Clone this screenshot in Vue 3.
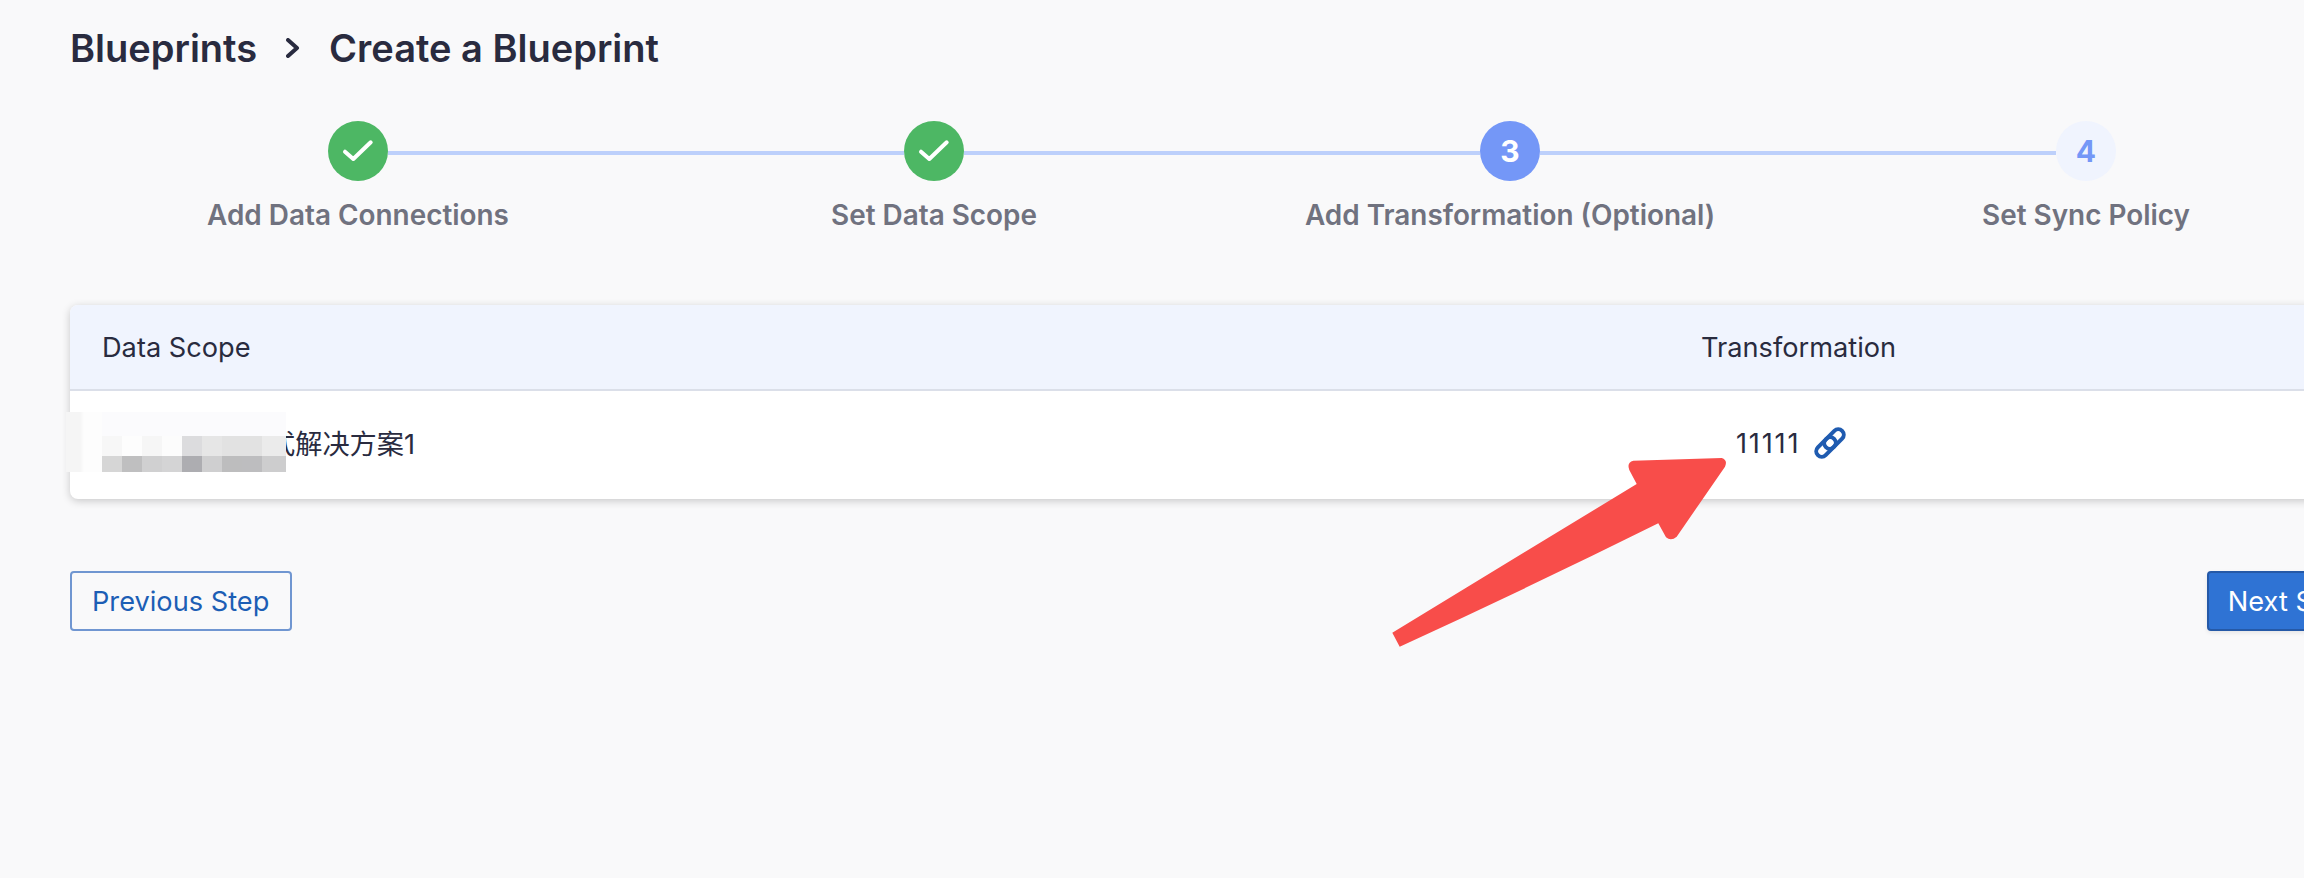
<script setup>
const steps = [
  { label: 'Add Data Connections', state: 'done' },
  { label: 'Set Data Scope', state: 'done' },
  { label: 'Add Transformation (Optional)', state: 'active', n: 3 },
  { label: 'Set Sync Policy', state: 'todo', n: 4 },
]
const row1 = ['#f7f7f7', '#fdfdfd', '#f6f6f6', '#fcfcfc', '#dcdcde', '#e6e6e6', '#e2e2e2', '#e2e2e2', '#ebebeb']
const row2 = ['#d6d6d6', '#bfbfc0', '#d0d0d1', '#d4d4d5', '#adadb1', '#cfcfd0', '#bdbdbe', '#bdbdbf', '#cdcdce']
</script>

<template>
  <div class="page">
    <div class="content">
      <div class="crumbs">
        <span>Blueprints</span>
        <svg class="chev" width="14" height="20" viewBox="0 0 14 20">
          <path d="M2 2 L11 10 L2 18" fill="none" stroke="#292b3f" stroke-width="4" stroke-linecap="round" stroke-linejoin="round" />
        </svg>
        <span>Create a Blueprint</span>
      </div>

      <div class="steps">
        <div v-for="(s, i) in steps" :key="s.label" class="step" :class="[s.state, { last: i === 3 }]">
          <div class="circle">
            <svg v-if="s.state === 'done'" width="60" height="60" viewBox="0 0 60 60">
              <path d="M17 30.7 L25.3 38 L42.7 21.3" fill="none" stroke="#fff" stroke-width="4" stroke-linecap="round" stroke-linejoin="round" />
            </svg>
            <template v-else>{{ s.n }}</template>
          </div>
          <div class="label">{{ s.label }}</div>
        </div>
      </div>

      <div class="table">
        <div class="thead">
          <div>Data Scope</div>
          <div>Transformation</div>
        </div>
        <div class="tbody">
          <div class="scope">式解决方案1</div>
          <div class="trans">
            <span class="num">11111</span>
            <svg width="32" height="32" viewBox="0 0 32 32" fill="none" stroke="#1f5bb0" stroke-width="4">
              <rect x="-11.5" y="-5.5" width="23" height="11" rx="5.5" transform="translate(20 12) rotate(-45)" />
              <rect x="-11.5" y="-5.5" width="23" height="11" rx="5.5" transform="translate(12 20) rotate(-45)" />
            </svg>
          </div>
        </div>
      </div>

      <div class="actions">
        <button class="btn prev">Previous Step</button>
        <button class="btn next">Next Step</button>
      </div>
    </div>

    <div class="mosaic">
      <div class="m-left"></div>
      <div class="m-main">
        <div class="m-top"></div>
        <div class="m-row r1">
          <i v-for="(c, i) in row1" :key="i" :style="{ background: c }"></i>
        </div>
        <div class="m-row r2">
          <i v-for="(c, i) in row2" :key="i" :style="{ background: c }"></i>
        </div>
      </div>
    </div>

    <svg class="arrow" width="2304" height="878" viewBox="0 0 2304 878">
      <path fill="#f84d4a" d="M1392.3 632.7 L1399.7 646.7 Q1530 587 1658.3 523.3 L1666 537.3 Q1671 541.5 1676.7 536.7 L1725 466.7 Q1728 460 1721.7 458 L1633.3 460.7 Q1626.5 462.5 1629.3 470 L1636.7 484 Z" />
    </svg>
  </div>
</template>

<style>
html, body { margin: 0; background: #f9f9fa; overflow: hidden; }
</style>

<style scoped>
.page {
  position: relative;
  width: 2304px;
  height: 878px;
  overflow: hidden;
  background: #f9f9fa;
  font-family: Inter, "Noto Sans CJK SC", sans-serif;
  color: #292b3f;
}
.content {
  width: 2304px;
  margin-left: 70px;
  padding-top: 24px;
}
.crumbs {
  display: flex;
  align-items: center;
  gap: 29px;
  height: 48px;
  font-size: 38px;
  font-weight: 600;
  line-height: 48px;
}
.steps {
  display: grid;
  grid-template-columns: repeat(4, 576px);
  margin-top: 49px;
}
.step {
  position: relative;
  display: flex;
  flex-direction: column;
  align-items: center;
}
.step::after {
  content: "";
  position: absolute;
  left: calc(50% + 30px);
  width: 516px;
  top: 30px;
  height: 4px;
  background: #bdd0fb;
}
.step.last::after { display: none; }
.circle {
  width: 60px;
  height: 60px;
  border-radius: 50%;
  display: flex;
  align-items: center;
  justify-content: center;
  font-size: 30px;
  font-weight: 700;
}
.done .circle { background: #4db764; }
.active .circle { background: #7497f7; color: #fff; }
.todo .circle { background: #f0f4fe; color: #7497f7; }
.label {
  margin-top: 17px;
  font-size: 27.9px;
  line-height: 34px;
  font-weight: 600;
  color: #70727f;
  white-space: nowrap;
}
.table {
  margin-top: 73px;
  border-radius: 8px;
  background: #fff;
  box-shadow: 0 2px 8px rgba(0, 0, 0, 0.2);
}
.thead, .tbody {
  display: grid;
  font-size: 27.2px;
}
.thead {
  height: 84px;
  align-items: center;
  background: #f0f4fe;
  border-bottom: 2px solid #dbdfe9;
  border-radius: 8px 8px 0 0;
  padding-left: 32px;
  grid-template-columns: 1599px 1fr;
}
.tbody {
  grid-template-columns: 1631px 1fr;
  height: 108px;
  align-items: center;
}
.scope {
  padding-left: 198px;
  line-height: 34px;
}
.trans {
  display: flex;
  align-items: center;
  gap: 14px;
  padding-left: 35px;
  margin-top: -4px;
}
.num { letter-spacing: 1.8px; }
.actions {
  display: flex;
  justify-content: space-between;
  margin-top: 72px;
}
.btn {
  height: 60px;
  box-sizing: border-box;
  border-radius: 4px;
  font-family: inherit;
  font-size: 27.2px;
  cursor: pointer;
}
.prev {
  padding: 0 21px 0 20px;
  background: transparent;
  border: 2px solid #7096d1;
  color: #1c5eb5;
}
.next {
  padding: 0 20px 0 19px;
  background: #2f73d4;
  border: 2px solid #2559a7;
  color: #fff;
  box-shadow: 0 2px 4px rgba(0, 0, 0, 0.08);
  margin-right: -2px;
}
.mosaic {
  position: absolute;
  left: 66px;
  top: 412px;
  width: 220px;
  height: 60px;
  display: flex;
}
.m-left {
  width: 36px;
  height: 60px;
  background: linear-gradient(90deg, #f5f5f5 0, #f5f5f5 14px, #fdfdfd 18px, #fdfdfd 100%);
}
.m-main { flex: 1; }
.m-top { height: 24px; background: #fbfbfd; }
.m-row { display: grid; grid-template-columns: repeat(8, 20px) 24px; }
.r1 { height: 20px; }
.r2 { height: 16px; }
.m-row i { display: block; }
.arrow {
  position: absolute;
  left: 0;
  top: 0;
  pointer-events: none;
}
</style>
